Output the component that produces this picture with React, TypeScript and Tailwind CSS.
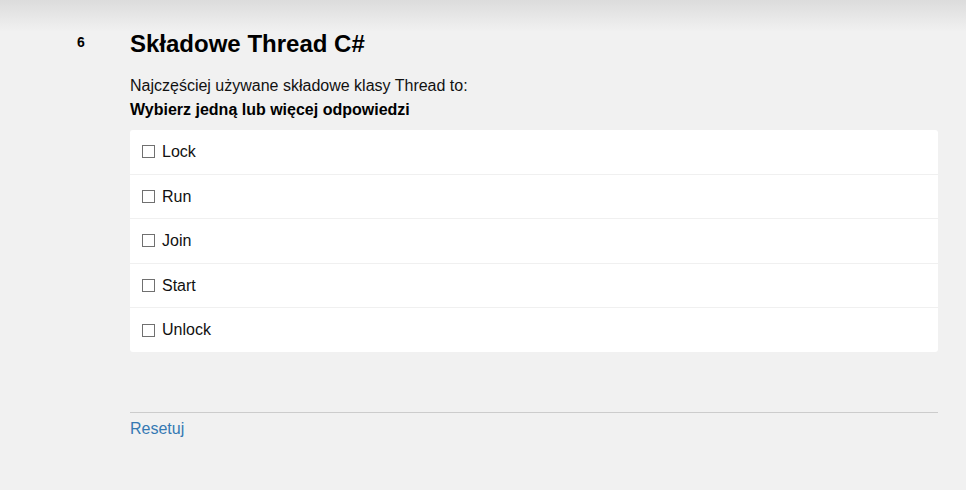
import { useState } from 'react'

const answers = ['Lock', 'Run', 'Join', 'Start', 'Unlock']

export default function App() {
  const [checked, setChecked] = useState<Record<string, boolean>>({})

  const toggle = (a: string) => setChecked((c) => ({ ...c, [a]: !c[a] }))

  return (
    <div className="min-h-[490px] bg-[linear-gradient(to_bottom,#dcdcdc_0px,#f1f1f1_32px)] font-['Liberation_Sans',Arial,sans-serif] text-[#111]">
      <div className="flex">
        {/* Question number */}
        <div className="w-[130px] shrink-0 pl-[77px] pt-[30px]">
          <span className="text-[14px] leading-[16px] font-bold text-black">6</span>
        </div>

        {/* Question body */}
        <div className="flex-1 pr-[28px] pt-[30px]">
          <h2 className="text-[24px] leading-[28px] font-bold text-black">Składowe Thread C#</h2>
          <p className="mt-[16px] text-[16px] leading-[24px]">
            Najczęściej używane składowe klasy Thread to:
          </p>
          <p className="text-[16px] leading-[24px] font-bold text-black">Wybierz jedną lub więcej odpowiedzi</p>

          <div className="mt-[8px] bg-white rounded-[3px] divide-y divide-[#f0f0f0]">
            {answers.map((a) => (
              <label
                key={a}
                className="flex items-center gap-[7px] px-[12px] py-[12px] text-[16px] leading-[19.6px] cursor-pointer"
              >
                <input
                  type="checkbox"
                  checked={!!checked[a]}
                  onChange={() => toggle(a)}
                  className="appearance-none w-[13px] h-[13px] m-0 border border-[#707070] bg-white checked:bg-[#333] shrink-0"
                />
                <span>{a}</span>
              </label>
            ))}
          </div>

          <div className="mt-[60px] border-t border-[#cccccc] pt-[4px]">
            <button
              onClick={() => setChecked({})}
              className="text-[16px] leading-[24px] text-[#3579b3] hover:underline"
            >
              Resetuj
            </button>
          </div>
        </div>
      </div>
    </div>
  )
}
